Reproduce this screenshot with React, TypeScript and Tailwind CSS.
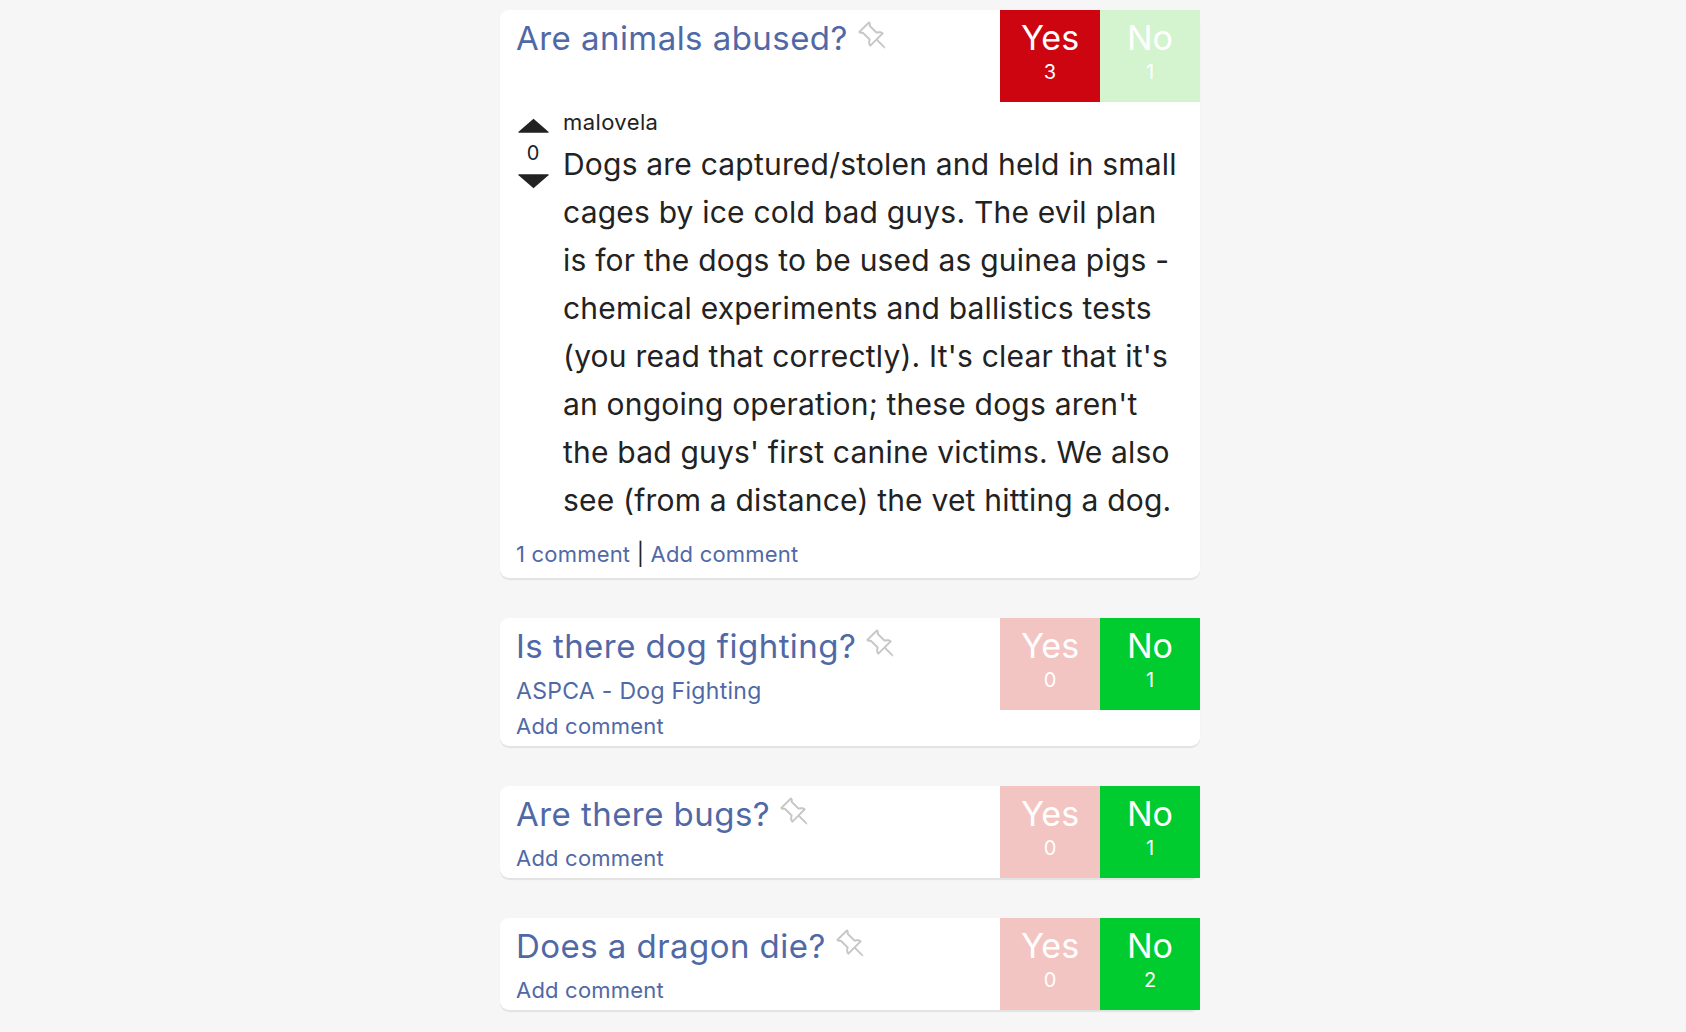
import React from "react";
import { BsPinAngle } from "react-icons/bs";

const Pin = () => (
  <BsPinAngle className="inline-block w-[31px] h-[31px] align-top mt-[2px] ml-[9px] -scale-x-100 text-[#c6c6c6]" />
);

type Q = {
  title: string;
  yes: number;
  no: number;
  winner: "yes" | "no";
  source?: string;
  comments?: number;
  body?: boolean;
};

const questions: Q[] = [
  { title: "Are animals abused?", yes: 3, no: 1, winner: "yes", comments: 1, body: true },
  { title: "Is there dog fighting?", yes: 0, no: 1, winner: "no", source: "ASPCA - Dog Fighting" },
  { title: "Are there bugs?", yes: 0, no: 1, winner: "no" },
  { title: "Does a dragon die?", yes: 0, no: 2, winner: "no" },
];

const Votes = ({ q }: { q: Q }) => (
  <div className="float-right flex h-[92px] -mt-[8px] -mr-[16px]">
    <div
      className={
        "w-[100px] h-[92px] flex flex-col items-center pt-[8px] text-white " +
        (q.winner === "yes" ? "bg-[#cc0511]" : "bg-[#f3c5c2]")
      }
    >
      <div className="text-[34px] leading-[40px]">Yes</div>
      <div className="text-[20px] leading-[28px]">{q.yes}</div>
    </div>
    <div
      className={
        "w-[100px] h-[92px] flex flex-col items-center pt-[8px] text-white " +
        (q.winner === "no" ? "bg-[#00cb2f]" : "bg-[#d3f4cf]")
      }
    >
      <div className="text-[34px] leading-[40px]">No</div>
      <div className="text-[20px] leading-[28px]">{q.no}</div>
    </div>
  </div>
);

const Up = () => (
  <svg viewBox="0 0 32 16" className="w-[33px] h-[17px]">
    <path d="M16 1.5 L30.5 14 Q31.5 15 30 15 L2 15 Q0.5 15 1.5 14 Z" fill="#222" />
  </svg>
);
const Down = () => (
  <svg viewBox="0 0 32 16" className="w-[33px] h-[17px]">
    <path d="M16 14.5 L30.5 2 Q31.5 1 30 1 L2 1 Q0.5 1 1.5 2 Z" fill="#222" />
  </svg>
);

const Card = ({ q }: { q: Q }) => (
  <div className="bg-white rounded-[9px] shadow-[0_2px_1px_rgba(0,0,0,0.08)] pt-[8px] px-[16px] flow-root">
    <Votes q={q} />
    <div className="text-[33px] leading-[40px] text-[#5069a6] tracking-[0.45px]">
      {q.title}
      <Pin />
    </div>
    {q.source && (
      <div className="mt-[10px] text-[23px] leading-[30px] text-[#5069a6] tracking-[0.3px]">{q.source}</div>
    )}
    {q.body ? (
      <>
        <div className="clear-both pt-[6px] flex">
          <div className="w-[34px] flex flex-col items-center shrink-0">
            <div className="mt-[9px]"><Up /></div>
            <div className="mt-[9px] text-[20px] leading-[20px] text-[#222]">0</div>
            <div className="mt-[10px]"><Down /></div>
          </div>
          <div className="ml-[13px] flex-1">
            <div className="text-[22px] leading-[28px] text-[#222] tracking-[0.4px]">malovela</div>
            <div className="mt-[4px] text-[30px] leading-[48px] text-[#222] tracking-[0.2px]">
              Dogs are captured/stolen and held in small cages by ice cold bad guys. The evil plan is for the dogs to be used as guinea pigs - chemical experiments and ballistics tests (you read that correctly). It's clear that it's an ongoing operation; these dogs aren't the bad guys' first canine victims. We also see (from a distance) the vet hitting a dog.
            </div>
          </div>
        </div>
        <div className="mt-[16px] mb-[10px] text-[22px] leading-[28px] tracking-[0.2px]">
          <span className="text-[#5069a6]">1 comment</span>
          <span className="text-[#222]"> | </span>
          <span className="text-[#5069a6]">Add comment</span>
        </div>
      </>
    ) : (
      <div className={(q.source ? "mt-[6px]" : "mt-[10px]") + " mb-[6px] text-[22px] leading-[28px] text-[#5069a6] tracking-[0.2px]"}>
        Add comment
      </div>
    )}
  </div>
);

export default function App() {
  return (
    <div className="h-screen overflow-hidden bg-[#f6f6f6] pt-[10px] pl-[14px] flex justify-center" style={{ fontFamily: "Inter, 'Noto Sans', sans-serif" }}>
      <div className="w-[700px] flex flex-col gap-[40px]">
        {questions.map((q) => (
          <Card key={q.title} q={q} />
        ))}
      </div>
    </div>
  );
}
